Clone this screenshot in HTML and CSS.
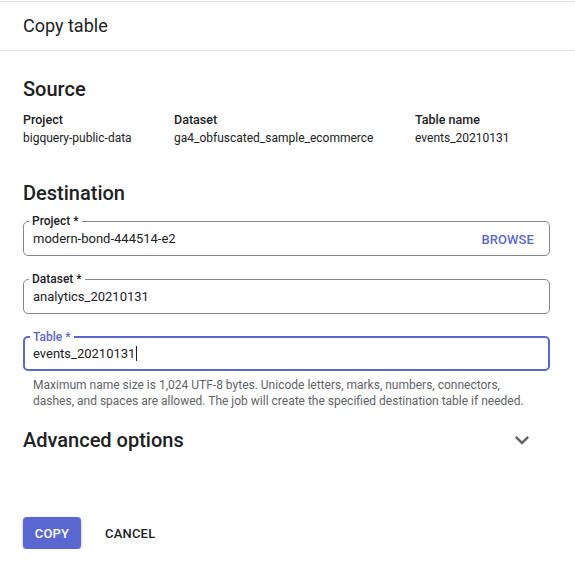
FILE: index.html
```html
<!DOCTYPE html>
<html>
<head>
<meta charset="utf-8">
<link rel="stylesheet" href="styles.css">
</head>
<body>
<div class="dialog">
  <div class="header">Copy table</div>
  <div class="content">
    <h2 class="section-title source-title">Source</h2>
    <div class="source-grid">
      <div class="col col-project">
        <div class="src-label">Project</div>
        <div class="src-value">bigquery-public-data</div>
      </div>
      <div class="col col-dataset">
        <div class="src-label">Dataset</div>
        <div class="src-value">ga4_obfuscated_sample_ecommerce</div>
      </div>
      <div class="col col-table">
        <div class="src-label">Table name</div>
        <div class="src-value">events_20210131</div>
      </div>
    </div>

    <h2 class="section-title dest-title">Destination</h2>
    <fieldset class="field">
      <legend>Project *</legend>
      <div class="field-row">
        <span class="field-value">modern-bond-444514-e2</span>
        <span class="browse">BROWSE</span>
      </div>
    </fieldset>
    <fieldset class="field">
      <legend>Dataset *</legend>
      <div class="field-row">
        <span class="field-value">analytics_20210131</span>
      </div>
    </fieldset>
    <fieldset class="field focused">
      <legend>Table *</legend>
      <div class="field-row">
        <span class="field-value">events_20210131<span class="caret"></span></span>
      </div>
    </fieldset>
    <div class="hint">Maximum name size is 1,024 UTF-8 bytes. Unicode letters, marks, numbers, connectors, dashes, and spaces are allowed. The job will create the specified destination table if needed.</div>

    <div class="advanced">
      <h2 class="section-title adv-title">Advanced options</h2>
      <svg class="chevron" viewBox="0 0 24 24" width="28" height="28"><path d="M16.59 8.59L12 13.17 7.41 8.59 6 10l6 6 6-6z" fill="#5f6368"/></svg>
    </div>

    <div class="actions">
      <button class="btn btn-primary">COPY</button>
      <button class="btn btn-text">CANCEL</button>
    </div>
  </div>
</div>
</body>
</html>
```

FILE: styles.css
```css
html, body {
  margin: 0;
  padding: 0;
  background: #fff;
}
body {
  font-family: Roboto, "Liberation Sans", Arial, sans-serif;
  color: #202124;
}
.dialog {
  margin-top: 1px;
  border-top: 1px solid #e3e3e3;
}
.header {
  height: 48px;
  line-height: 47px;
  border-bottom: 1px solid #e3e3e3;
  padding-left: 23px;
  font-size: 18px;
  color: #202124;
}
.content {
  padding: 0 25px 0 23px;
}
.section-title {
  margin: 0;
  font-size: 20px;
  font-weight: 500;
  line-height: 24px;
  color: #202124;
}
.source-title {
  margin-top: 26px;
}
.source-grid {
  display: flex;
  margin-top: 11px;
}
.col-project { width: 151px; }
.col-dataset { width: 241px; }
.src-label {
  font-size: 12.5px;
  font-weight: 500;
  line-height: 16px;
}
.src-value {
  font-size: 12px;
  line-height: 16px;
  margin-top: 2px;
  color: #202124;
}
.dest-title {
  margin-top: 35px;
  margin-bottom: 8px;
}
.field {
  margin: 0 0 15px 0;
  padding: 2px 15px 8px 9px;
  border: 1px solid #85878b;
  border-radius: 5px;
  min-width: 0;
}
.field legend {
  margin-left: -4px;
  padding: 0 3px;
  font-size: 12px;
  font-weight: 500;
  line-height: 16px;
  color: #202124;
}
.field.focused {
  border: 2px solid #5b67d1;
  padding: 1px 14px 7px 8px;
  margin-bottom: 6px;
}
.field.focused legend {
  color: #5b67d1;
  margin-left: -3px;
}
.field-row {
  display: flex;
  justify-content: space-between;
  align-items: center;
  height: 16px;
}
.field-value {
  font-size: 13px;
  line-height: 16px;
  color: #202124;
}
.caret {
  display: inline-block;
  width: 1px;
  height: 15px;
  background: #202124;
  vertical-align: -3px;
  margin-left: 1px;
}
.browse {
  font-size: 13px;
  font-weight: 500;
  color: #5b67d1;
  letter-spacing: 0.1px;
}
.hint {
  padding-left: 10px;
  padding-right: 20px;
  font-size: 12px;
  line-height: 16px;
  color: #5f6368;
}
.advanced {
  display: flex;
  justify-content: space-between;
  align-items: center;
  margin-top: 17px;
  padding-right: 14px;
}
.chevron {
  display: block;
}
.actions {
  display: flex;
  align-items: center;
  margin-top: 63px;
  gap: 12px;
}
.btn {
  font-family: Roboto, "Liberation Sans", Arial, sans-serif;
  font-size: 13px;
  font-weight: 500;
  border: none;
  border-radius: 4px;
  height: 32px;
  padding: 0 12px;
  cursor: pointer;
  letter-spacing: 0.2px;
}
.btn-primary {
  background: #5b67d1;
  color: #fff;
  width: 58px;
  padding: 0;
  box-shadow: 0 1px 3px rgba(0,0,0,0.3);
}
.btn-text {
  background: transparent;
  color: #202124;
}
```
